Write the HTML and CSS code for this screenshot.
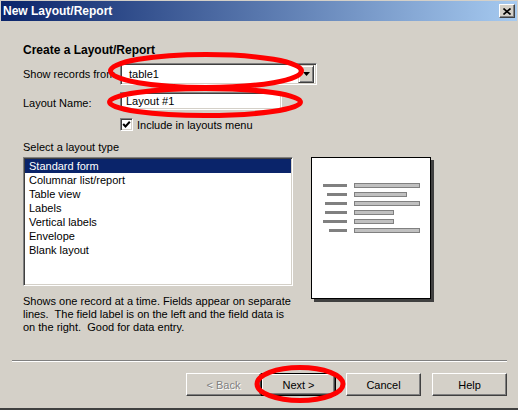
FILE: index.html
```html
<!DOCTYPE html>
<html lang="en">
<head>
    <meta charset="UTF-8">
    <title>New Layout/Report</title>
    <link rel="stylesheet" href="styles.css">
</head>
<body>
    <div class="window">
        <div class="titlebar">
            <span class="title">New Layout/Report</span>
            <span class="close-btn">
                <svg width="8" height="7" viewBox="0 0 8 7"><path d="M0.5 0.5 L7.5 6.5 M7.5 0.5 L0.5 6.5" stroke="#000" stroke-width="1.6"/></svg>
            </span>
        </div>

        <div class="content">
            <h1>Create a Layout/Report</h1>

            <div class="field-row combo-row">
                <label>Show records from</label>
                <div class="combo">
                    <span class="combo-text">table1</span>
                    <span class="combo-btn">
                        <svg width="7" height="4" viewBox="0 0 7 4"><path d="M0 0 H7 L3.5 4 Z" fill="#000"/></svg>
                    </span>
                </div>
            </div>

            <div class="field-row name-row">
                <label>Layout Name:</label>
                <div class="textbox">Layout #1</div>
            </div>

            <div class="check-row">
                <span class="checkbox">
                    <svg width="9" height="9" viewBox="0 0 9 9"><path d="M1.2 4 L3.5 6.5 L7.8 1.8" fill="none" stroke="#000" stroke-width="2"/></svg>
                </span>
                <span>Include in layouts menu</span>
            </div>

            <div class="section-label">Select a layout type</div>

            <div class="chooser">
                <div class="left-col">
                    <ul class="listbox">
                        <li class="selected">Standard form</li>
                        <li>Columnar list/report</li>
                        <li>Table view</li>
                        <li>Labels</li>
                        <li>Vertical labels</li>
                        <li>Envelope</li>
                        <li>Blank layout</li>
                    </ul>
                    <p class="desc">Shows one record at a time. Fields appear on separate<br>lines.&nbsp; The field label is on the left and the field data is<br>on the right.&nbsp; Good for data entry.</p>
                </div>

                <div class="preview">
                    <div class="sample-row"><span class="lbl-wrap"><span class="lbl" style="width:24px"></span></span><span class="fld" style="width:66px"></span></div>
                    <div class="sample-row"><span class="lbl-wrap"><span class="lbl" style="width:20px"></span></span><span class="fld" style="width:53px"></span></div>
                    <div class="sample-row"><span class="lbl-wrap"><span class="lbl" style="width:22px"></span></span><span class="fld" style="width:66px"></span></div>
                    <div class="sample-row"><span class="lbl-wrap"><span class="lbl" style="width:22px"></span></span><span class="fld" style="width:40px"></span></div>
                    <div class="sample-row"><span class="lbl-wrap"><span class="lbl" style="width:24px"></span></span><span class="fld" style="width:40px"></span></div>
                    <div class="sample-row"><span class="lbl-wrap"><span class="lbl" style="width:18px"></span></span><span class="fld" style="width:66px"></span></div>
                </div>
            </div>
        </div>

        <div class="footer">
            <div class="separator"></div>
            <div class="buttons">
                <button class="btn disabled">&lt; Back</button>
                <button class="btn default">Next &gt;</button>
                <button class="btn cancel">Cancel</button>
                <button class="btn help">Help</button>
            </div>
        </div>

        <!-- red marks drawn over the dialog -->
        <svg class="marks" width="518" height="410" viewBox="0 0 518 410">
            <ellipse cx="206" cy="71" rx="95.5" ry="16.5" fill="none" stroke="#ff0000" stroke-width="5"/>
            <ellipse cx="205" cy="102" rx="95.5" ry="13.5" fill="none" stroke="#ff0000" stroke-width="5"/>
            <ellipse cx="300" cy="384" rx="43" ry="16.5" fill="none" stroke="#ff0000" stroke-width="5"/>
        </svg>
    </div>
</body>
</html>
```

FILE: styles.css
```css
* {
    margin: 0;
    padding: 0;
    box-sizing: border-box;
}

body {
    font-family: 'Liberation Sans', Arial, sans-serif;
    font-size: 11px;
    color: #000;
    background-color: #d4d0c8;
}

.window {
    position: relative;
    width: 518px;
    height: 410px;
    padding-top: 1px;
    background-color: #d4d0c8;
    border-bottom: 2px solid #404040;
    display: flex;
    flex-direction: column;
}

.titlebar {
    height: 20px;
    margin: 0 1px;
    padding: 0 2px 0 2px;
    display: flex;
    align-items: center;
    justify-content: space-between;
    background: linear-gradient(to right, #0a246a, #a6caf0);
}

.title {
    color: #fff;
    font-weight: bold;
    font-size: 12px;
}

.close-btn {
    width: 16px;
    height: 14px;
    display: flex;
    align-items: center;
    justify-content: center;
    background-color: #d4d0c8;
    border: 1px solid;
    border-color: #fff #404040 #404040 #fff;
    box-shadow: inset -1px -1px #808080;
}

.content {
    padding-left: 23px;
}

h1 {
    font-size: 12px;
    line-height: 14px;
    font-weight: bold;
    margin-top: 22px;
}

.field-row {
    display: flex;
    align-items: center;
}

.field-row label {
    width: 97px;
}

.combo-row {
    margin-top: 6px;
    height: 22px;
}

.combo {
    width: 197px;
    height: 22px;
    display: flex;
    align-items: center;
    justify-content: space-between;
    background-color: #fff;
    border: 1px solid;
    border-color: #808080 #fff #fff #808080;
    box-shadow: inset 1px 1px #404040, inset -1px -1px #d4d0c8;
    padding: 2px 2px 2px 8px;
}

.combo-btn {
    width: 16px;
    height: 18px;
    display: flex;
    align-items: center;
    justify-content: center;
    background-color: #d4d0c8;
    border: 1px solid;
    border-color: #d4d0c8 #404040 #404040 #d4d0c8;
    box-shadow: inset 1px 1px #fff, inset -1px -1px #808080;
}

.name-row {
    margin-top: 7px;
    height: 18px;
}

.name-row label {
    margin-top: 3px;
}

.textbox {
    width: 162px;
    height: 18px;
    line-height: 14px;
    padding-left: 5px;
    background-color: #fff;
    border: 1px solid;
    border-color: #808080 #fff #fff #808080;
    box-shadow: inset 1px 1px #404040, inset -1px -1px #d4d0c8;
    padding-top: 1px;
}

.check-row {
    margin-top: 8px;
    padding-left: 97px;
    height: 13px;
    display: flex;
    align-items: center;
    gap: 4px;
}

.checkbox {
    width: 13px;
    height: 13px;
    display: flex;
    align-items: center;
    justify-content: center;
    background-color: #fff;
    border: 1px solid;
    border-color: #808080 #fff #fff #808080;
    box-shadow: inset 1px 1px #404040, inset -1px -1px #d4d0c8;
}

.section-label {
    margin-top: 10px;
    line-height: 13px;
}

.chooser {
    margin-top: 3px;
    display: flex;
    gap: 18px;
}

.left-col {
    width: 270px;
}

.listbox {
    list-style: none;
    height: 129px;
    padding: 1px;
    background-color: #fff;
    border: 1px solid;
    border-color: #808080 #fff #fff #808080;
    box-shadow: inset 1px 1px #404040, inset -1px -1px #d4d0c8;
}

.listbox li {
    height: 14px;
    line-height: 14px;
    padding-left: 4px;
}

.listbox li.selected {
    background-color: #0a246a;
    color: #fff;
}

.desc {
    margin-top: 9px;
    line-height: 13px;
}

.preview {
    width: 120px;
    height: 142px;
    padding-top: 23px;
    background-color: #fff;
    border: 1px solid #000;
    box-shadow: 3px 3px 0 #404040;
}

.sample-row {
    height: 9px;
    display: flex;
    align-items: center;
}

.lbl-wrap {
    width: 35px;
    display: flex;
    justify-content: flex-end;
}

.lbl {
    height: 3px;
    background-color: #808080;
}

.fld {
    height: 5px;
    margin-left: 7px;
    background-color: #c0c0c0;
    border: 1px solid #808080;
}

.footer {
    margin-top: auto;
    padding-bottom: 12px;
}

.separator {
    margin: 0 11px 0 12px;
    border-top: 1px solid #808080;
    border-bottom: 1px solid #fff;
}

.buttons {
    margin-top: 11px;
    padding-right: 11px;
    display: flex;
    justify-content: flex-end;
}

.btn {
    width: 75px;
    height: 23px;
    font-family: 'Liberation Sans', Arial, sans-serif;
    font-size: 11px;
    color: #000;
    background-color: #d4d0c8;
    border: 1px solid;
    border-color: #fff #404040 #404040 #fff;
    box-shadow: inset -1px -1px #808080;
}

.btn.disabled {
    color: #808080;
    text-shadow: 1px 1px 0 #fff;
}

.btn.default {
    border-color: #000;
    box-shadow: inset 1px 1px #fff, inset -1px -1px #404040, inset -2px -2px #808080;
}

.btn.cancel {
    margin-left: 10px;
}

.btn.help {
    margin-left: 11px;
}

.marks {
    position: absolute;
    top: 0;
    left: 0;
    pointer-events: none;
}
```
